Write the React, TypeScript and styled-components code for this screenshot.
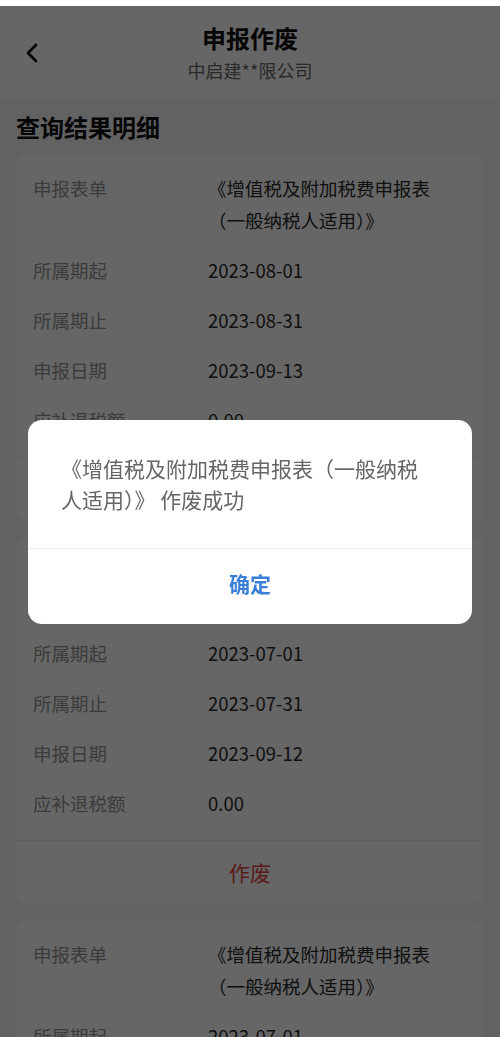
import React from 'react'
import styled, { createGlobalStyle } from 'styled-components'

interface iRecord {
  form: string
  start: string
  end: string
  date: string
  amount: string
}

const records: iRecord[] = [
  { form: '《增值税及附加税费申报表（一般纳税人适用）》', start: '2023-08-01', end: '2023-08-31', date: '2023-09-13', amount: '0.00' },
  { form: '《增值税及附加税费申报表（一般纳税人适用）》', start: '2023-07-01', end: '2023-07-31', date: '2023-09-12', amount: '0.00' },
  { form: '《增值税及附加税费申报表（一般纳税人适用）》', start: '2023-07-01', end: '2023-07-31', date: '2023-09-12', amount: '0.00' },
]

const Row: React.FC<{ label: string; value: string }> = ({ label, value }) => (
  <InfoRow>
    <Label>{label}</Label>
    <Value>{value}</Value>
  </InfoRow>
)

const RecordCard: React.FC<{ item: iRecord }> = ({ item }) => (
  <Card>
    <Rows>
      <Row label="申报表单" value={item.form} />
      <Row label="所属期起" value={item.start} />
      <Row label="所属期止" value={item.end} />
      <Row label="申报日期" value={item.date} />
      <Row label="应补退税额" value={item.amount} />
    </Rows>
    <VoidButton>作废</VoidButton>
  </Card>
)

const App: React.FC = () => {
  return (
    <>
      <GlobalStyle />
      <StatusStrip />
      <Header>
        <BackButton>
          <svg width="12" height="20" viewBox="0 0 12 20">
            <polyline points="10,2 2,10 10,18" fill="none" stroke="#000" strokeWidth="2.6" strokeLinecap="round" strokeLinejoin="round" />
          </svg>
        </BackButton>
        <Title>申报作废</Title>
        <SubTitle>中启建**限公司</SubTitle>
      </Header>
      <Section>
        <SectionTitle>查询结果明细</SectionTitle>
        <CardList>
          {records.map((r, i) => (
            <RecordCard key={i} item={r} />
          ))}
        </CardList>
      </Section>
      <Mask>
        <Dialog>
          <DialogText>《增值税及附加税费申报表（一般纳税人适用）》 作废成功</DialogText>
          <DialogButton>确定</DialogButton>
        </Dialog>
      </Mask>
    </>
  )
}

export default App

const GlobalStyle = createGlobalStyle`
html, body {
  margin:0;
  padding:0;
  overflow:hidden;
  background:#f4f4f4;
  font-family:"Noto Sans CJK SC", "Noto Sans", sans-serif;
}
`

const StatusStrip = styled.div`
height:6px;
background:#fff;
`

const Header = styled.div`
position:relative;
height:92px;
background:#fff;
display:flex;
flex-direction:column;
align-items:center;
padding-top:16px;
box-sizing:border-box;
`

const BackButton = styled.div`
position:absolute;
left:26px;
top:37px;
width:12px;
height:20px;
display:flex;
`

const Title = styled.div`
font-size:24px;
line-height:32px;
font-weight:700;
color:#111;
`

const SubTitle = styled.div`
margin-top:3px;
font-size:18px;
line-height:26px;
color:#666;
`

const Section = styled.div`
padding:13px 16px 0;
`

const SectionTitle = styled.div`
font-size:24px;
line-height:32px;
font-weight:700;
color:#111;
`

const CardList = styled.div`
margin-top:12px;
display:flex;
flex-direction:column;
gap:18px;
`

const Card = styled.div`
background:#fff;
border-radius:8px;
display:flex;
flex-direction:column;
`

const Rows = styled.div`
padding:8px 0 12px;
border-bottom:1px solid #ececec;
`

const InfoRow = styled.div`
display:flex;
padding:9px 48px 9px 17px;
`

const Label = styled.div`
width:175px;
flex-shrink:0;
font-size:18.5px;
line-height:32px;
color:#949494;
`

const Value = styled.div`
flex:1;
font-size:18.5px;
line-height:32px;
color:#2a2a2a;
`

const VoidButton = styled.div`
height:62px;
display:flex;
justify-content:center;
align-items:center;
font-size:21px;
color:#e04545;
`

const Mask = styled.div`
position:fixed;
top:6px;
left:0;
right:0;
bottom:0;
background:rgba(0,0,0,0.6);
display:flex;
justify-content:center;
align-items:center;
`

const Dialog = styled.div`
width:444px;
background:#fff;
border-radius:14px;
overflow:hidden;
`

const DialogText = styled.div`
padding:33px 36px 33px 33px;
font-size:21px;
line-height:31px;
color:#666;
border-bottom:1px solid #eee;
`

const DialogButton = styled.div`
height:75px;
box-sizing:border-box;
padding-bottom:6px;
display:flex;
justify-content:center;
align-items:center;
font-size:21px;
font-weight:700;
color:#3b7fd6;
`
